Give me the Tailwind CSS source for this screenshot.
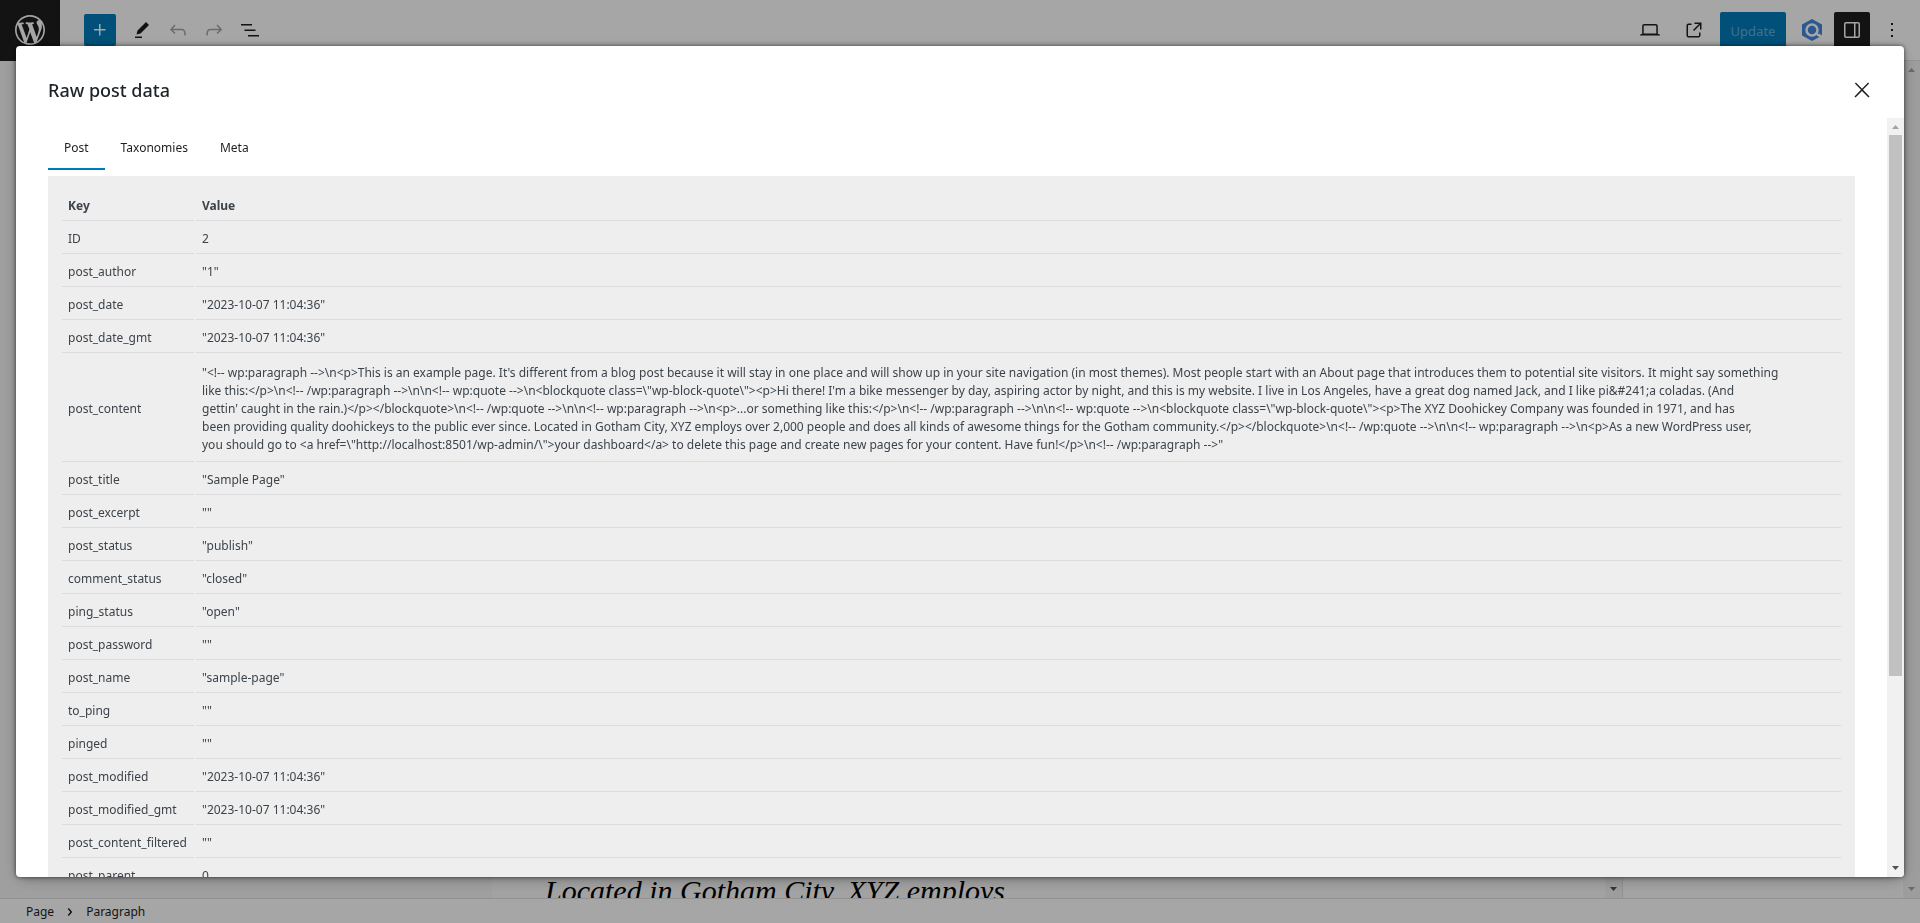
<!DOCTYPE html>
<html lang="en">
<head>
<meta charset="utf-8">
<title>Edit Page</title>
<script src="https://cdn.jsdelivr.net/npm/@tailwindcss/browser@4"></script>
</head>
<body class="h-screen overflow-hidden bg-white font-['Noto_Sans',sans-serif] text-[12px] text-[#1e1e1e]">
<div class="flex h-full flex-col">
  <header class="flex h-[61px] shrink-0 items-center justify-between border-b border-[#e0e0e0] pr-[10px]">
    <div class="flex items-center">
      <a href="#" aria-label="View pages" class="flex h-[61px] w-[60px] items-center justify-center bg-[#1e1e1e] text-white">
        <svg class="size-9" viewBox="-2 -2 24 24" fill="currentColor"><path d="M20 10c0-5.51-4.49-10-10-10C4.48 0 0 4.49 0 10c0 5.52 4.48 10 10 10 5.51 0 10-4.48 10-10zM7.78 15.37L4.37 6.22c.55-.02 1.17-.08 1.17-.08.5-.06.44-1.13-.06-1.11 0 0-1.45.11-2.37.11-.18 0-.37 0-.58-.01C4.12 2.69 6.87 1.11 10 1.11c2.33 0 4.45.87 6.05 2.34-.68-.11-1.65.39-1.65 1.58 0 .74.45 1.36.9 2.1.35.61.55 1.36.55 2.46 0 1.49-1.4 5-1.4 5l-3.03-8.37c.54-.02.82-.17.82-.17.5-.05.44-1.25-.06-1.22 0 0-1.44.12-2.38.12-.87 0-2.33-.12-2.33-.12-.5-.03-.56 1.2-.06 1.22l.92.08 1.26 3.41zM17.41 10c.24-.64.74-1.87.43-4.25.7 1.29 1.05 2.71 1.05 4.25 0 3.29-1.73 6.24-4.4 7.78.97-2.59 1.94-5.2 2.92-7.78zM6.1 18.09C3.12 16.65 1.11 13.53 1.11 10c0-1.3.23-2.48.72-3.59C3.25 10.3 4.67 14.2 6.1 18.09zm4.03-6.63l2.58 6.98c-.86.29-1.76.45-2.71.45-.79 0-1.57-.11-2.29-.33.81-2.38 1.62-4.74 2.42-7.1z"/></svg>
      </a>
      <button aria-label="Toggle block inserter" class="mr-2 ml-6 flex size-8 items-center justify-center rounded-[2px] bg-[#007cba] text-white">
        <svg class="size-6" viewBox="0 0 24 24" fill="currentColor"><path d="M11 12.5V17.5H12.5V12.5H17.5V11H12.5V6H11V11H6V12.5H11Z"/></svg>
      </button>
      <button aria-label="Tools" class="flex size-9 items-center justify-center"><svg class="size-6" viewBox="0 0 24 24" fill="currentColor"><path d="m19 7-3-3-8.5 8.5-1 4 4-1L19 7Zm-7 11.5H5V20h7v-1.5Z"/></svg></button>
      <button aria-label="Undo" class="flex size-9 items-center justify-center text-[#1e1e1e]/40"><svg class="size-6" viewBox="0 0 24 24" fill="currentColor"><path d="M18.3 11.7c-.6-.6-1.4-.9-2.3-.9H6.7l2.9-3.3-1.1-1-4.5 5L8.5 16l1-1-2.7-2.7H16c.5 0 .9.2 1.3.5 1 1 1 3.4 1 4.5v.3h1.5v-.2c0-1.5 0-4.3-1.5-5.7z"/></svg></button>
      <button aria-label="Redo" class="flex size-9 items-center justify-center text-[#1e1e1e]/40"><svg class="size-6" viewBox="0 0 24 24" fill="currentColor"><path d="M15.6 6.5l-1.1 1 2.9 3.3H8c-.9 0-1.7.3-2.3.9-1.4 1.5-1.4 4.2-1.4 5.6v.2h1.5v-.3c0-1.1 0-3.5 1-4.5.3-.3.7-.5 1.3-.5h9.2L14.5 15l1.1 1.1 4.6-4.6-4.6-5z"/></svg></button>
      <button aria-label="Document overview" class="flex size-9 items-center justify-center"><svg class="size-6" viewBox="0 0 24 24" fill="currentColor"><path d="M3 6h11v1.5H3V6Zm3.5 5.5h11V13h-11v-1.5ZM21 17H10v1.5h11V17Z"/></svg></button>
    </div>
    <div class="flex items-center gap-1">
      <button aria-label="Preview" class="mr-1 flex size-9 items-center justify-center"><svg class="size-6" viewBox="0 0 24 24" fill="currentColor"><path d="M20.5 16h-.7V8c0-1.1-.9-2-2-2H6.2c-1.1 0-2 .9-2 2v8h-.7c-.8 0-1.5.7-1.5 1.5h20c0-.8-.7-1.5-1.5-1.5zM5.7 8c0-.3.2-.5.5-.5h11.6c.3 0 .5.2.5.5v7.6H5.7V8z"/></svg></button>
      <a href="#" aria-label="View page" class="mr-1 flex size-9 items-center justify-center"><svg class="size-6" viewBox="0 0 24 24" fill="currentColor"><path d="M19.5 4.5h-7V6h4.44l-5.97 5.97 1.06 1.06L18 7.06v4.44h1.5v-7Zm-13 1a2 2 0 0 0-2 2v10a2 2 0 0 0 2 2h10a2 2 0 0 0 2-2v-3H17v3a.5.5 0 0 1-.5.5h-10a.5.5 0 0 1-.5-.5v-10a.5.5 0 0 1 .5-.5h3V5.5h-3Z"/></svg></a>
      <button class="mr-1 h-9 w-[66px] rounded-[2px] bg-[#007cba] pt-1 text-center text-[13px] text-white/40">Update</button>
      <button aria-label="Query inspector" class="flex size-9 items-center justify-center">
        <svg class="size-6" viewBox="0 0 24 24" fill="none"><path fill="#4488e0" d="M12 1 22 6.500V17.500L19 15.500 16.500 17.500 19.500 19 12 23 2 17.500V6.500Z"/><circle cx="12" cy="12" r="5.500" stroke="#fff" stroke-width="2.500"/><path d="m16 15.500 2 1.500" stroke="#fff" stroke-width="1.500"/></svg>
      </button>
      <button aria-label="Settings" class="flex size-9 items-center justify-center rounded-[2px] bg-[#1e1e1e] text-white"><svg class="size-6" viewBox="0 0 24 24" fill="currentColor"><path d="M18 4H6c-1.100 0-2 .9-2 2v12c0 1.100.9 2 2 2h12c1.100 0 2-.9 2-2V6c0-1.100-.9-2-2-2zm-4 14.500H6c-.3 0-.5-.2-.5-.5V6c0-.3.2-.5.5-.5h8v13zm4.500-.5c0 .3-.2.5-.5.5h-2.500v-13H18c.3 0 .5.2.5.5v12z"/></svg></button>
      <button aria-label="Options" class="flex size-9 items-center justify-center"><svg class="size-6" viewBox="0 0 24 24" fill="currentColor"><path d="M13 19h-2v-2h2v2zm0-6h-2v-2h2v2zm0-6h-2V5h2v2z"/></svg></button>
    </div>
  </header>
  <div class="flex min-h-0 flex-1">
    <main class="flex min-w-0 flex-1 bg-[#f5f5f5]">
      <div class="flex flex-1 items-end overflow-hidden pl-[492px]">
        <p class="h-[26px] flex-1 bg-[#f9f9f9] pl-[53px] font-['Liberation_Serif',serif] text-[30px] leading-[38px] whitespace-nowrap text-black italic">Located in Gotham City, XYZ employs</p>
      </div>
      <div class="flex w-[17px] items-end justify-center bg-[#f1f1f1] pb-[7px]"><svg class="h-1 w-[7px]" viewBox="0 0 7 4"><path fill="#505050" d="M0 0h7L3.500 4z"/></svg></div>
    </main>
    <aside class="w-[281px] border-l border-[#e0e0e0] bg-[#fafafa]"></aside>
    <div class="flex w-[17px] flex-col items-center justify-between bg-[#f1f1f1] py-[7px]">
      <svg class="h-1 w-[7px]" viewBox="0 0 7 4"><path fill="#a3a3a3" d="M0 4h7L3.500 0z"/></svg>
      <svg class="h-1 w-[7px]" viewBox="0 0 7 4"><path fill="#a3a3a3" d="M0 0h7L3.500 4z"/></svg>
    </div>
  </div>
  <footer class="flex h-[25px] shrink-0 items-center border-t border-[#e0e0e0] pt-px pl-[26px]">
    <span>Page</span>
    <svg class="mx-1 size-6" viewBox="0 0 24 24" fill="currentColor"><path d="M10.862 8.040 14.280 12.029 10.862 16.017 9.723 15.040 12.305 12.029 9.723 9.017Z"/></svg>
    <button>Paragraph</button>
  </footer>
</div>

<div class="fixed inset-0 flex items-start justify-center bg-black/35 px-4 pt-[46px] pb-[46px]">
  <section role="dialog" aria-labelledby="dlg" class="flex h-full w-full flex-col overflow-hidden rounded-[4px] bg-white shadow-[0_3px_15px_-3px_rgba(0,0,0,0.4),0_0_4px_rgba(0,0,0,0.6)]">
    <div class="flex h-[72px] shrink-0 items-center justify-between pt-4 pr-[30px] pl-8">
      <h1 id="dlg" class="text-[18px] leading-6 font-medium text-[#1d2327]">Raw post data</h1>
      <button aria-label="Close" class="flex size-6 items-center justify-center"><svg class="size-6" viewBox="0 0 24 24" fill="currentColor"><path d="M13 11.800l6.100-6.300-1-1-6.100 6.200-6.100-6.200-1 1 6.100 6.300-6.500 6.700 1 1 6.500-6.600 6.500 6.600 1-1z"/></svg></button>
    </div>
    <div class="flex min-h-0 flex-1">
      <div class="min-w-0 flex-1 overflow-hidden px-8 pt-1">
        <div role="tablist" class="flex h-12">
          <button role="tab" aria-selected="true" class="border-b-2 border-[#007cba] px-4 pt-[6px]">Post</button>
          <button role="tab" class="border-b-2 border-transparent px-4 pt-[6px]">Taxonomies</button>
          <button role="tab" class="border-b-2 border-transparent px-4 pt-[6px]">Meta</button>
        </div>
        <div class="mt-[6px] bg-[#eee] p-3">
          <table class="w-full border-separate border-spacing-[2px] text-left leading-[18px] text-[#3c434a] [&_td]:border-b [&_td]:border-[#dcdcde] [&_td]:px-[6px] [&_td]:pt-[7px] [&_td]:pb-[5px] [&_th]:border-b [&_th]:border-[#dcdcde] [&_th]:px-[6px] [&_th]:pt-[7px] [&_th]:pb-[5px]">
            <thead><tr><th class="w-[132px]">Key</th><th>Value</th></tr></thead>
            <tbody>
              <tr><td>ID</td><td>2</td></tr>
              <tr><td>post_author</td><td>"1"</td></tr>
              <tr><td>post_date</td><td>"2023-10-07 11:04:36"</td></tr>
              <tr><td>post_date_gmt</td><td>"2023-10-07 11:04:36"</td></tr>
              <tr class="h-[107px]"><td>post_content</td><td>"&lt;!-- wp:paragraph --&gt;\n&lt;p&gt;This is an example page. It's different from a blog post because it will stay in one place and will show up in your site navigation (in most themes). Most people start with an About page that introduces them to potential site visitors. It might say something<br>like this:&lt;/p&gt;\n&lt;!-- /wp:paragraph --&gt;\n\n&lt;!-- wp:quote --&gt;\n&lt;blockquote class=\"wp-block-quote\"&gt;&lt;p&gt;Hi there! I'm a bike messenger by day, aspiring actor by night, and this is my website. I live in Los Angeles, have a great dog named Jack, and I like pi&amp;#241;a coladas. (And<br>gettin' caught in the rain.)&lt;/p&gt;&lt;/blockquote&gt;\n&lt;!-- /wp:quote --&gt;\n\n&lt;!-- wp:paragraph --&gt;\n&lt;p&gt;...or something like this:&lt;/p&gt;\n&lt;!-- /wp:paragraph --&gt;\n\n&lt;!-- wp:quote --&gt;\n&lt;blockquote class=\"wp-block-quote\"&gt;&lt;p&gt;The XYZ Doohickey Company was founded in 1971, and has<br>been providing quality doohickeys to the public ever since. Located in Gotham City, XYZ employs over 2,000 people and does all kinds of awesome things for the Gotham community.&lt;/p&gt;&lt;/blockquote&gt;\n&lt;!-- /wp:quote --&gt;\n\n&lt;!-- wp:paragraph --&gt;\n&lt;p&gt;As a new WordPress user,<br>you should go to &lt;a href=\"http://localhost:8501/wp-admin/\"&gt;your dashboard&lt;/a&gt; to delete this page and create new pages for your content. Have fun!&lt;/p&gt;\n&lt;!-- /wp:paragraph --&gt;"</td></tr>
              <tr><td>post_title</td><td>"Sample Page"</td></tr>
              <tr><td>post_excerpt</td><td>""</td></tr>
              <tr><td>post_status</td><td>"publish"</td></tr>
              <tr><td>comment_status</td><td>"closed"</td></tr>
              <tr><td>ping_status</td><td>"open"</td></tr>
              <tr><td>post_password</td><td>""</td></tr>
              <tr><td>post_name</td><td>"sample-page"</td></tr>
              <tr><td>to_ping</td><td>""</td></tr>
              <tr><td>pinged</td><td>""</td></tr>
              <tr><td>post_modified</td><td>"2023-10-07 11:04:36"</td></tr>
              <tr><td>post_modified_gmt</td><td>"2023-10-07 11:04:36"</td></tr>
              <tr><td>post_content_filtered</td><td>""</td></tr>
              <tr><td>post_parent</td><td>0</td></tr>
            </tbody>
          </table>
        </div>
      </div>
      <div class="flex w-[17px] shrink-0 flex-col items-center bg-[#f1f1f1] py-[7px]">
        <svg class="h-1 w-[7px] shrink-0" viewBox="0 0 7 4"><path fill="#a3a3a3" d="M0 4h7L3.500 0z"/></svg>
        <div class="mt-[6px] h-[541px] w-[13px] bg-[#c1c1c1]"></div>
        <svg class="mt-auto h-1 w-[7px] shrink-0" viewBox="0 0 7 4"><path fill="#505050" d="M0 0h7L3.500 4z"/></svg>
      </div>
    </div>
  </section>
</div>
</body>
</html>
